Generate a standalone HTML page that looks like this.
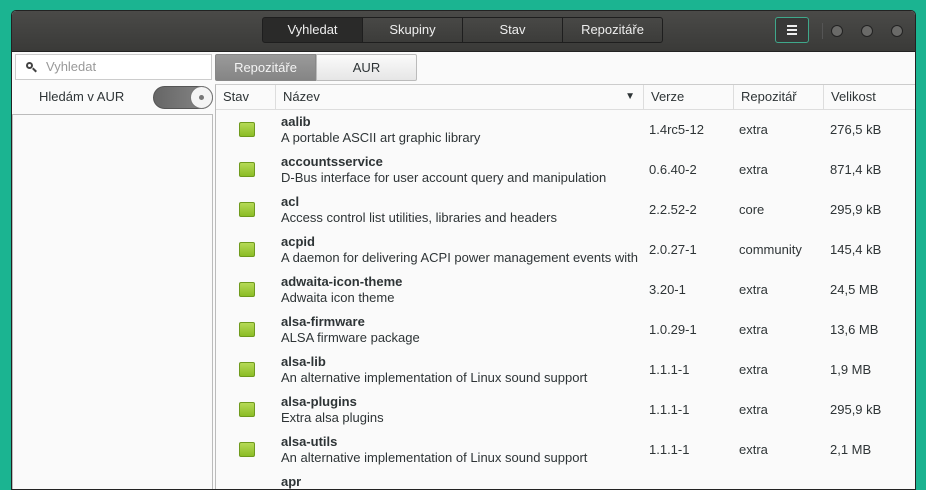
<!DOCTYPE html><html><head><meta charset="utf-8"><style>
*{box-sizing:border-box;margin:0;padding:0}
body{width:926px;height:481px;overflow:hidden;background:#1bb491;font-family:"Liberation Sans","DejaVu Sans",sans-serif;font-size:13px;color:#2e3436;position:relative}
.win{position:absolute;left:11px;top:10px;width:905px;height:480px;background:#fafafa;border:1px solid #222;border-radius:5px 5px 0 0;overflow:hidden}
.tb{position:absolute;left:0;top:0;width:100%;height:41px;background:linear-gradient(#4a4a48,#3a3a38);border-bottom:1px solid #222}
.abs{position:absolute}
.seg{position:absolute;top:6px;height:26px;border:1px solid #1e1e1e;background:linear-gradient(#484846,#3c3c3a);color:#eee;text-align:center;line-height:24px;font-size:13px}
.dot{position:absolute;top:14px;width:12px;height:12px;border-radius:50%;background:#6a6a68;border:1px solid #222}
.hdr{position:absolute;top:74px;height:25px;line-height:24px;border-bottom:1px solid #ddd;border-right:1px solid #ddd;padding-left:7px;background:#fafafa}
.row{position:absolute;left:204px;width:700px;height:40px}
.ic{position:absolute;left:23px;top:11px;width:16px;height:15px;background:linear-gradient(#b6d957,#8bbd26);border:1px solid #6f9a1d;border-radius:2px}
.n{position:absolute;left:65px;top:3px;font-weight:bold}
.d{position:absolute;left:65px;top:19px}
.c{position:absolute;top:11px}
</style></head><body>
<div class="win">
<div class="tb">
<div class="seg" style="left:250px;width:101px;background:#2a2a29;border-radius:3px 0 0 3px">Vyhledat</div>
<div class="seg" style="left:350px;width:101px">Skupiny</div>
<div class="seg" style="left:450px;width:101px">Stav</div>
<div class="seg" style="left:550px;width:101px;border-radius:0 3px 3px 0">Repozitáře</div>
<div class="seg" style="left:763px;width:34px;border-color:#3fa88b;border-radius:3px;background:#383837"></div>
<div class="abs" style="left:775px;top:14px;width:10px;height:2px;background:#eee;box-shadow:0 4px 0 #eee,0 8px 0 #eee"></div>
<div class="abs" style="left:810px;top:12px;width:1px;height:16px;background:#555"></div>
<div class="dot" style="left:819px"></div><div class="dot" style="left:849px"></div><div class="dot" style="left:879px"></div>
</div>
<div class="abs" style="left:3px;top:43px;width:197px;height:26px;border:1px solid #ccc;background:#fff;color:#999;line-height:24px;padding-left:30px">Vyhledat</div>
<div class="abs" style="left:14px;top:51px;width:7px;height:7px;border:2px solid #444;border-radius:50%"></div>
<div class="abs" style="left:20px;top:58px;width:5px;height:2px;background:#444;transform:rotate(45deg)"></div>
<div class="abs" style="left:27px;top:78px">Hledám v AUR</div>
<div class="abs" style="left:141px;top:75px;width:60px;height:23px;border-radius:12px;background:linear-gradient(90deg,#666,#888);border:1px solid #555"></div>
<div class="abs" style="left:178px;top:75px;width:23px;height:23px;border-radius:50%;background:#f4f4f4;border:1px solid #777"></div>
<div class="abs" style="left:187px;top:84px;width:5px;height:5px;border-radius:50%;background:#777"></div>
<div class="abs" style="left:0;top:103px;width:201px;height:400px;border:1px solid #bbb;background:#fafafa"></div>
<div class="abs" style="left:203px;top:43px;width:101px;height:27px;border:1px solid #888;background:linear-gradient(#9a9a9a,#858585);color:#f4f4f4;text-align:center;line-height:25px;border-radius:2px 0 0 2px">Repozitáře</div>
<div class="abs" style="left:304px;top:43px;width:101px;height:27px;border:1px solid #bbb;background:linear-gradient(#fafafa,#e6e6e6);text-align:center;line-height:25px;border-radius:0 2px 2px 0">AUR</div>
<div class="abs" style="left:203px;top:73px;width:702px;height:420px;border-left:1px solid #bbb;border-top:1px solid #ccc"></div>
<div class="hdr" style="left:204px;width:60px">Stav</div>
<div class="hdr" style="left:264px;width:368px">Název<span style="position:absolute;right:8px;top:0;font-size:10px">▼</span></div>
<div class="hdr" style="left:632px;width:90px">Verze</div>
<div class="hdr" style="left:722px;width:90px">Repozitář</div>
<div class="hdr" style="left:812px;width:93px;border-right:none">Velikost</div>
<div class="row" style="top:100px"><div class="ic"></div><div class="n">aalib</div><div class="d">A portable ASCII art graphic library</div><div class="c" style="left:433px">1.4rc5-12</div><div class="c" style="left:523px">extra</div><div class="c" style="left:614px">276,5 kB</div></div>
<div class="row" style="top:140px"><div class="ic"></div><div class="n">accountsservice</div><div class="d">D-Bus interface for user account query and manipulation</div><div class="c" style="left:433px">0.6.40-2</div><div class="c" style="left:523px">extra</div><div class="c" style="left:614px">871,4 kB</div></div>
<div class="row" style="top:180px"><div class="ic"></div><div class="n">acl</div><div class="d">Access control list utilities, libraries and headers</div><div class="c" style="left:433px">2.2.52-2</div><div class="c" style="left:523px">core</div><div class="c" style="left:614px">295,9 kB</div></div>
<div class="row" style="top:220px"><div class="ic"></div><div class="n">acpid</div><div class="d" style="width:363px;overflow:hidden;white-space:nowrap">A daemon for delivering ACPI power management events with</div><div class="c" style="left:433px">2.0.27-1</div><div class="c" style="left:523px">community</div><div class="c" style="left:614px">145,4 kB</div></div>
<div class="row" style="top:260px"><div class="ic"></div><div class="n">adwaita-icon-theme</div><div class="d">Adwaita icon theme</div><div class="c" style="left:433px">3.20-1</div><div class="c" style="left:523px">extra</div><div class="c" style="left:614px">24,5 MB</div></div>
<div class="row" style="top:300px"><div class="ic"></div><div class="n">alsa-firmware</div><div class="d">ALSA firmware package</div><div class="c" style="left:433px">1.0.29-1</div><div class="c" style="left:523px">extra</div><div class="c" style="left:614px">13,6 MB</div></div>
<div class="row" style="top:340px"><div class="ic"></div><div class="n">alsa-lib</div><div class="d">An alternative implementation of Linux sound support</div><div class="c" style="left:433px">1.1.1-1</div><div class="c" style="left:523px">extra</div><div class="c" style="left:614px">1,9 MB</div></div>
<div class="row" style="top:380px"><div class="ic"></div><div class="n">alsa-plugins</div><div class="d">Extra alsa plugins</div><div class="c" style="left:433px">1.1.1-1</div><div class="c" style="left:523px">extra</div><div class="c" style="left:614px">295,9 kB</div></div>
<div class="row" style="top:420px"><div class="ic"></div><div class="n">alsa-utils</div><div class="d">An alternative implementation of Linux sound support</div><div class="c" style="left:433px">1.1.1-1</div><div class="c" style="left:523px">extra</div><div class="c" style="left:614px">2,1 MB</div></div>
<div class="row" style="top:460px"><div class="n">apr</div></div>
</div>
</body></html>
